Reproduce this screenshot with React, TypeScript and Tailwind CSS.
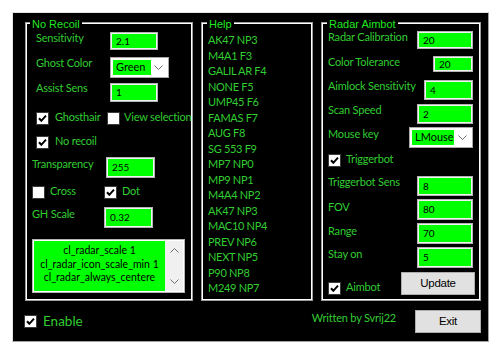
const lbl =
  "font-['Lato',sans-serif] text-[11px] leading-[14px] tracking-[-0.2px] text-[#32cd32] whitespace-nowrap";
const ttl =
  "absolute top-[-6px] bg-black px-[2px] font-['Liberation_Sans',sans-serif] text-[11px] leading-[15px] text-[#22e622] whitespace-nowrap";
const box = "relative h-[279px] border border-[#9d9d9d] shadow-[inset_1px_1px_0_#fff,inset_-1px_-1px_0_#fff]";
const btn =
  "flex items-center justify-center bg-[#e1e1e1] border border-[#adadad] text-black font-['Liberation_Sans',sans-serif] text-[11.5px] tracking-[-0.3px]";

function Check({ on }: { on?: boolean }) {
  return (
    <svg width="13" height="13" viewBox="0 0 13 13" className="shrink-0">
      <rect x="0.5" y="0.5" width="12" height="12" fill="#fff" stroke="#3a3a3a" />
      {on && <path d="M3 6.3 L5.3 8.8 L10 3.6" fill="none" stroke="#000" strokeWidth="2" />}
    </svg>
  );
}

function Chevron({ up }: { up?: boolean }) {
  return (
    <svg width="9" height="5" viewBox="0 0 9 5" className="shrink-0">
      <path d={up ? "M0.5 4.5 L4.5 0.5 L8.5 4.5" : "M0.5 0.5 L4.5 4.5 L8.5 0.5"} fill="none" stroke="#6f6f6f" />
    </svg>
  );
}

function Field({ value, className }: { value: string; className: string }) {
  return (
    <div
      className={`flex items-center shrink-0 bg-[#00ff00] border border-[#b4b4b4] shadow-[inset_0_0_0_1px_#f2f2f2] pl-[5px] font-['Lato',sans-serif] text-[10px] text-black ${className}`}
    >
      {value}
    </div>
  );
}

function Select({ value, className, inner }: { value: string; className: string; inner: string }) {
  return (
    <div className={`flex items-center shrink-0 bg-white border border-[#a9a9a9] p-[2px] ${className}`}>
      <div className={`h-full flex items-center pl-[3px] bg-[#00ff00] font-['Lato',sans-serif] text-[11px] text-black ${inner}`}>
        {value}
      </div>
      <div className="flex-1 flex justify-center">
        <Chevron />
      </div>
    </div>
  );
}

export default function App() {
  const help = [
    "AK47 NP3",
    "M4A1 F3",
    "GALIL AR F4",
    "NONE F5",
    "UMP45 F6",
    "FAMAS F7",
    "AUG F8",
    "SG 553 F9",
    "MP7 NP0",
    "MP9 NP1",
    "M4A4 NP2",
    "AK47 NP3",
    "MAC10 NP4",
    "PREV NP6",
    "NEXT NP5",
    "P90 NP8",
    "M249 NP7",
  ];

  return (
    <div className="min-h-screen bg-white pt-[12px] pl-[12px]">
      <div className="w-[477px] h-[330px] bg-black border border-[#e3e3e3] border-r-[#a0a0a0] border-b-[#a0a0a0] flex flex-col">
        <div className="flex gap-[8px] pt-[9px] pl-[12px]">
          {/* No Recoil */}
          <div className={`${box} w-[168px]`}>
            <span className={`${ttl} left-[4px]`}>No Recoil</span>
            <div className="flex flex-col pt-[9px]">
              <div className="flex items-start h-[25px] pl-[10px]">
                <span className={`${lbl} w-[74px] -mt-[1px]`}>Sensitivity</span>
                <Field value="2.1" className="w-[48px] h-[18px]" />
              </div>
              <div className="flex items-start h-[26px] pl-[10px]">
                <span className={`${lbl} w-[74px] -mt-[1px]`}>Ghost Color</span>
                <Select value="Green" className="w-[59px] h-[21px]" inner="w-[38px]" />
              </div>
              <div className="flex items-start h-[29px] pl-[10px]">
                <span className={`${lbl} w-[74px] -mt-[2px]`}>Assist Sens</span>
                <Field value="1" className="w-[48px] h-[19px]" />
              </div>
              <div className="flex items-start h-[24px] pl-[10px]">
                <div className="flex items-start w-[71px]">
                  <Check on />
                  <span className={`${lbl} ml-[6px] -mt-[2px]`}>Ghosthair</span>
                </div>
                <Check />
                <span className={`${lbl} ml-[4px] -mt-[2px]`}>View selection</span>
              </div>
              <div className="flex items-start h-[21px] pl-[10px]">
                <Check on />
                <span className={`${lbl} ml-[6px] -mt-[2px]`}>No recoil</span>
              </div>
              <div className="flex items-start h-[29px] pl-[6px]">
                <span className={`${lbl} w-[74px]`}>Transparency</span>
                <Field value="255" className="w-[49px] h-[21px]" />
              </div>
              <div className="flex items-start h-[21px] pl-[6px]">
                <div className="flex items-start w-[72px]">
                  <Check />
                  <span className={`${lbl} ml-[5px] -mt-[2px]`}>Cross</span>
                </div>
                <Check on />
                <span className={`${lbl} ml-[5px] -mt-[2px]`}>Dot</span>
              </div>
              <div className="flex items-start h-[32px] pl-[6px]">
                <span className={`${lbl} w-[72px]`}>GH Scale</span>
                <Field value="0.32" className="w-[49px] h-[21px]" />
              </div>
              <div className="pl-[6px]">
                <div className="flex w-[153px] h-[54px] border border-[#b4b4b4] shadow-[inset_0_0_0_1px_#fff] p-[1px]">
                  <div className="flex-1 min-w-0 overflow-hidden bg-[#00ff00] flex flex-col items-center pt-[3px] font-['Lato',sans-serif] text-[10.5px] leading-[13.5px] text-black whitespace-nowrap">
                    <span>cl_radar_scale 1</span>
                    <span>cl_radar_icon_scale_min 1</span>
                    <span>cl_radar_always_centere</span>
                  </div>
                  <div className="w-[18px] bg-[#f0f0f0] flex flex-col items-center justify-between py-[7px]">
                    <Chevron up />
                    <Chevron />
                  </div>
                </div>
              </div>
            </div>
          </div>

          {/* Help */}
          <div className={`${box} w-[112px]`}>
            <span className={`${ttl} left-[5px]`}>Help</span>
            <div className="flex flex-col pt-[9px] pl-[6px] font-['Lato',sans-serif] text-[11px] leading-[15.5px] tracking-[-0.3px] text-[#32cd32] whitespace-nowrap">
              {help.map((h, i) => (
                <span key={i}>{h}</span>
              ))}
            </div>
          </div>

          {/* Radar Aimbot */}
          <div className={`${box} w-[160px]`}>
            <span className={`${ttl} left-[5px]`}>Radar Aimbot</span>
            <div className="flex flex-col pt-[8px] pl-[6px] pr-[7px]">
              <div className="flex items-start justify-between h-[25px]">
                <span className={`${lbl} -mt-[1px]`}>Radar Calibration</span>
                <Field value="20" className="w-[56px] h-[18px]" />
              </div>
              <div className="flex items-start justify-between h-[24px]">
                <span className={`${lbl} -mt-[1px]`}>Color Tolerance</span>
                <Field value="20" className="w-[40px] h-[16px]" />
              </div>
              <div className="flex items-start justify-between h-[24px]">
                <span className={`${lbl} -mt-[1px]`}>Aimlock Sensitivity</span>
                <Field value="4" className="w-[49px] h-[20px]" />
              </div>
              <div className="flex items-start justify-between h-[23px]">
                <span className={`${lbl} -mt-[1px]`}>Scan Speed</span>
                <Field value="2" className="w-[56px] h-[20px]" />
              </div>
              <div className="flex items-start justify-between h-[27px]">
                <span className={lbl}>Mouse key</span>
                <Select value="LMouse" className="w-[64px] h-[21px]" inner="w-[42px]" />
              </div>
              <div className="flex items-start h-[22px]">
                <Check on />
                <span className={`${lbl} ml-[5px] -mt-[2px]`}>Triggerbot</span>
              </div>
              <div className="flex items-start justify-between h-[23px]">
                <span className={`${lbl} -mt-[1px]`}>Triggerbot Sens</span>
                <Field value="8" className="w-[56px] h-[20px]" />
              </div>
              <div className="flex items-start justify-between h-[24px]">
                <span className={`${lbl} mt-[1px]`}>FOV</span>
                <Field value="80" className="w-[56px] h-[21px]" />
              </div>
              <div className="flex items-start justify-between h-[24px]">
                <span className={`${lbl} mt-[1px]`}>Range</span>
                <Field value="70" className="w-[56px] h-[21px]" />
              </div>
              <div className="flex items-start justify-between h-[25px]">
                <span className={lbl}>Stay on</span>
                <Field value="5" className="w-[56px] h-[21px]" />
              </div>
              <div className="flex items-start">
                <div className="flex items-start mt-[10px]">
                  <Check on />
                  <span className={`${lbl} ml-[5px] -mt-[2px]`}>Aimbot</span>
                </div>
                <div className={`${btn} ml-auto -mr-[2px] w-[74px] h-[23px]`}>Update</div>
              </div>
            </div>
          </div>
        </div>

        <div className="flex items-start mt-[9px] pl-[11px] pr-[7px]">
          <div className="flex items-center mt-[3px]">
            <Check on />
            <span className="ml-[6px] font-['Lato',sans-serif] text-[13.5px] leading-[16px] text-[#32cd32]">Enable</span>
          </div>
          <span className={`${lbl} ml-auto mr-[19px] mt-[1px]`}>Written by Svrij22</span>
          <div className={`${btn} w-[66px] h-[23px]`}>Exit</div>
        </div>
      </div>
    </div>
  );
}
